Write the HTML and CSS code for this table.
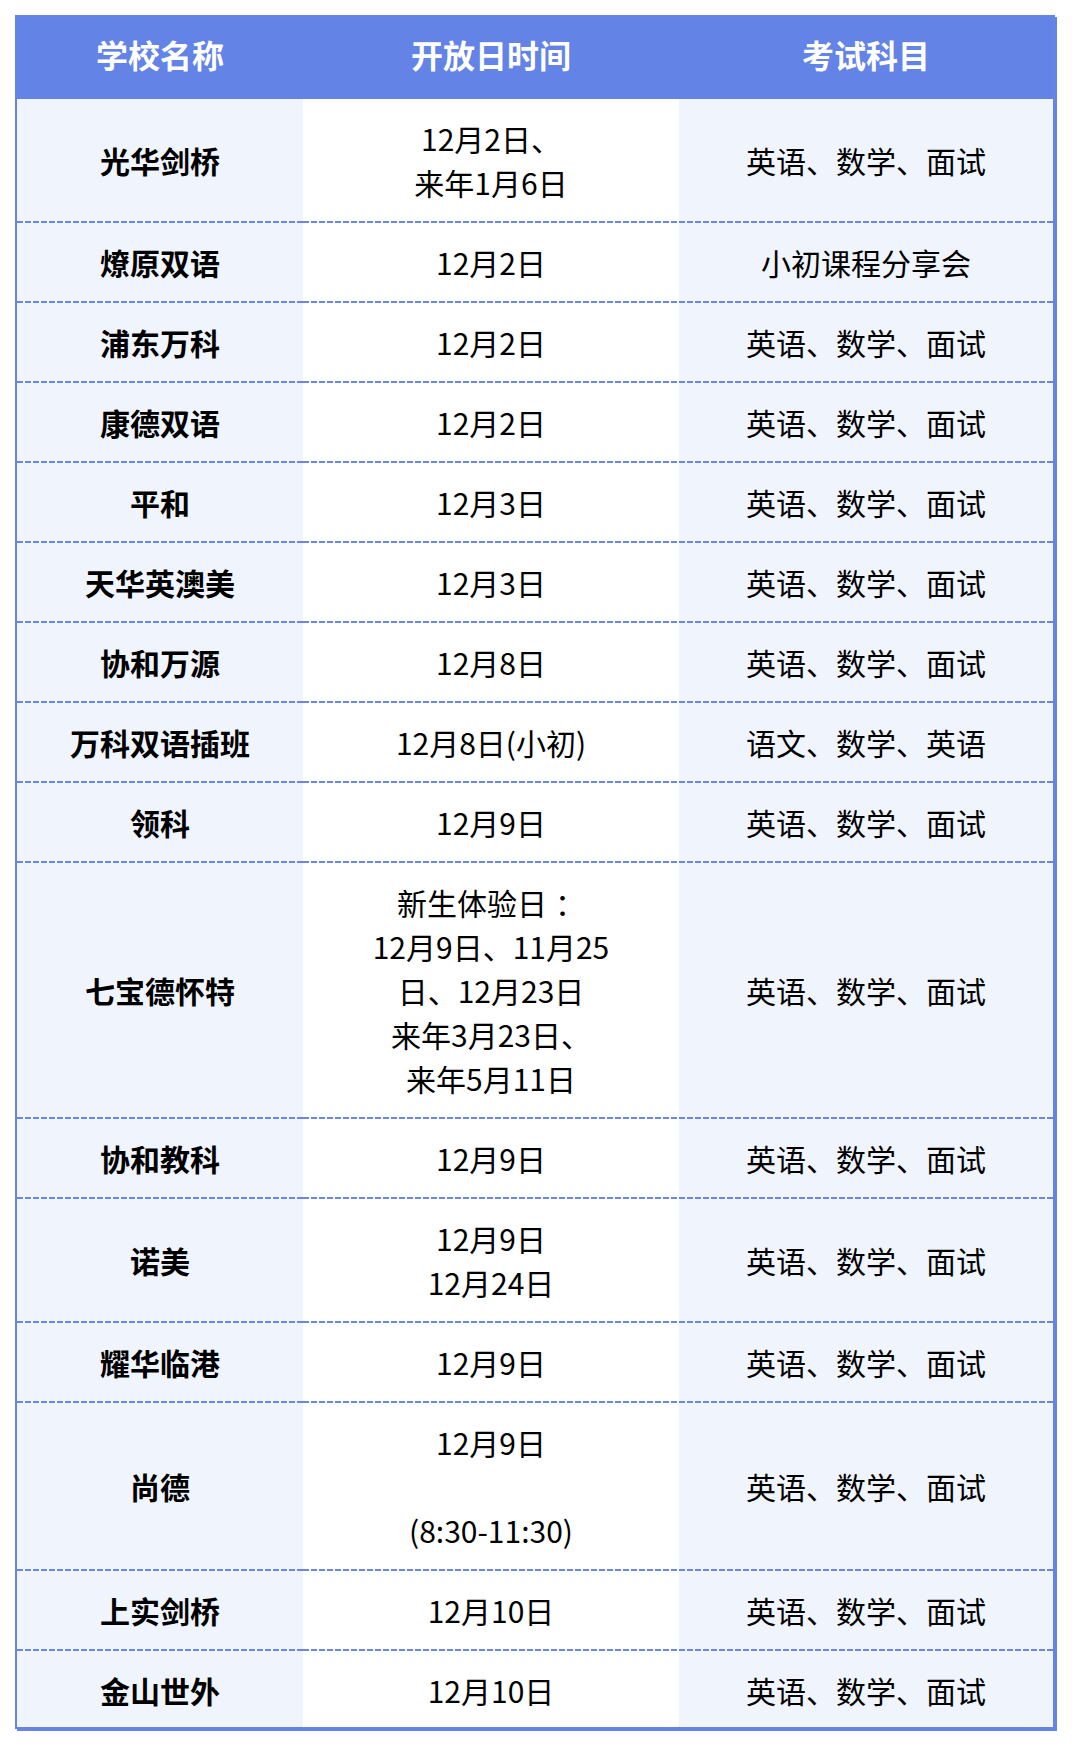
FILE: index.html
```html
<!DOCTYPE html>
<html lang="zh-CN">
<head>
<meta charset="utf-8">
<title>开放日时间</title>
<link rel="stylesheet" href="styles.css">
</head>
<body>
<div class="wrap">
  <table class="schedule">
    <colgroup>
      <col class="c-name">
      <col class="c-date">
      <col class="c-subj">
    </colgroup>
    <thead>
      <tr><th>学校名称</th><th>开放日时间</th><th>考试科目</th></tr>
    </thead>
    <tbody>
      <tr><td class="name">光华剑桥</td><td class="date">12月2日、<br>来年1月6日</td><td class="subj">英语、数学、面试</td></tr>
      <tr><td class="name">燎原双语</td><td class="date">12月2日</td><td class="subj">小初课程分享会</td></tr>
      <tr><td class="name">浦东万科</td><td class="date">12月2日</td><td class="subj">英语、数学、面试</td></tr>
      <tr><td class="name">康德双语</td><td class="date">12月2日</td><td class="subj">英语、数学、面试</td></tr>
      <tr><td class="name">平和</td><td class="date">12月3日</td><td class="subj">英语、数学、面试</td></tr>
      <tr><td class="name">天华英澳美</td><td class="date">12月3日</td><td class="subj">英语、数学、面试</td></tr>
      <tr><td class="name">协和万源</td><td class="date">12月8日</td><td class="subj">英语、数学、面试</td></tr>
      <tr><td class="name">万科双语插班</td><td class="date">12月8日(小初)</td><td class="subj">语文、数学、英语</td></tr>
      <tr><td class="name">领科</td><td class="date">12月9日</td><td class="subj">英语、数学、面试</td></tr>
      <tr><td class="name">七宝德怀特</td><td class="date">新生体验日<span class="colon">：</span><br>12月9日、11月25<br>日、12月23日<br>来年3月23日、<br>来年5月11日</td><td class="subj">英语、数学、面试</td></tr>
      <tr><td class="name">协和教科</td><td class="date">12月9日</td><td class="subj">英语、数学、面试</td></tr>
      <tr><td class="name">诺美</td><td class="date">12月9日<br>12月24日</td><td class="subj">英语、数学、面试</td></tr>
      <tr><td class="name">耀华临港</td><td class="date">12月9日</td><td class="subj">英语、数学、面试</td></tr>
      <tr><td class="name">尚德</td><td class="date">12月9日<br><br>(8:30-11:30)</td><td class="subj">英语、数学、面试</td></tr>
      <tr><td class="name">上实剑桥</td><td class="date">12月10日</td><td class="subj">英语、数学、面试</td></tr>
      <tr><td class="name">金山世外</td><td class="date">12月10日</td><td class="subj">英语、数学、面试</td></tr>
    </tbody>
  </table>
</div>
</body>
</html>
```

FILE: styles.css
```css
html, body {
  margin: 0;
  padding: 0;
  background: #ffffff;
}

body {
  padding: 15px;
  font-family: "Noto Sans CJK SC", "Noto Sans", sans-serif;
  color: #000000;
}

.wrap {
  box-sizing: border-box;
  width: 1040px;
  border: 2px solid #6684e6;
  box-shadow: 2px 2px 0 #6684e6;
}

.schedule {
  width: 100%;
  border-collapse: collapse;
  border-spacing: 0;
  table-layout: fixed;
}

.c-name { width: 286px; }
.c-date { width: 376px; }
.c-subj { width: 374px; }

.schedule th {
  box-sizing: border-box;
  height: 82px;
  padding: 0 0 9px;
  background: #6383e6;
  color: #ffffff;
  font-size: 32px;
  font-weight: 700;
  line-height: 44px;
  text-align: center;
  vertical-align: middle;
}

.schedule td {
  padding: 17px 4px 19px;
  font-size: 30px;
  line-height: 44px;
  text-align: center;
  vertical-align: middle;
  background-image: repeating-linear-gradient(90deg, #6a87e8 0 6px, transparent 6px 8px);
  background-size: 100% 2px;
  background-position: left bottom;
  background-repeat: no-repeat;
}

.schedule td.name,
.schedule td.subj {
  background-color: #f0f4fd;
}

.schedule td.date {
  background-color: #ffffff;
}

.schedule td.name {
  font-weight: 700;
}

.colon {
  display: inline-block;
  padding-left: 8px;
}

.schedule tbody tr:last-child td {
  padding-bottom: 15px;
  background-image: none;
}
```
